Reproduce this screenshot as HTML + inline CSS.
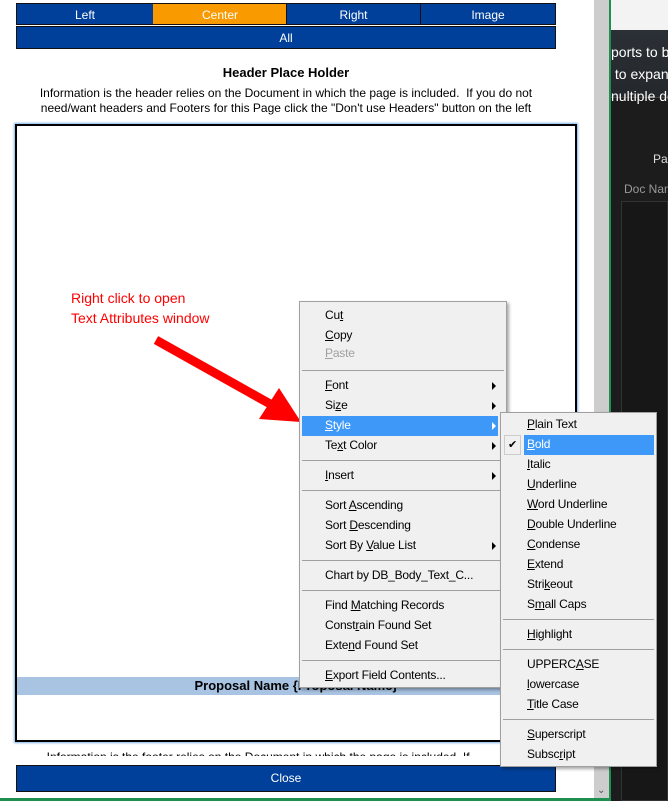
<!DOCTYPE html>
<html><head><meta charset="utf-8"><style>
*{margin:0;padding:0;box-sizing:border-box}
body{width:668px;height:801px;overflow:hidden;position:relative;background:#fff;font-family:"Liberation Sans",Arial,sans-serif}
.a{position:absolute}
.tab{position:absolute;top:3px;height:22px;background:#00409a;color:#fff;font-size:12px;text-align:center;line-height:22px;border:1px solid #111}
.menu{position:absolute;background:#f0f0f0;border:1px solid #a0a0a0;box-shadow:2px 2px 3px rgba(0,0,0,.35);font-size:12px;color:#000;letter-spacing:-0.2px}
.it{position:absolute;left:0;right:0;height:20px;line-height:19px}
.it span{position:absolute}
.sep{position:absolute;height:1px;background:#a0a0a0}
.arr{position:absolute;width:0;height:0;border-top:4px solid transparent;border-bottom:4px solid transparent;border-left:4px solid #000}
</style></head><body>
<div class="a" style="left:594px;top:0;width:15px;height:801px;background:#cdcdcd"></div>
<div class="a" style="left:609px;top:0;width:2px;height:801px;background:#1f8f4f"></div>
<div class="a" style="left:611px;top:0;width:57px;height:30px;background:#f3f3f3"></div>
<div class="a" style="left:611px;top:30px;width:57px;height:67px;background:linear-gradient(#2b3036,#24282c)"></div>
<div class="a" style="left:611px;top:97px;width:57px;height:704px;background:#1c1c1c;border-top:1px solid #444"></div>
<div class="a" style="left:611px;top:41px;color:#fff;font-size:14px;line-height:22px;white-space:nowrap;width:57px;overflow:hidden">ports to b<br>&nbsp;to expand<br>nultiple do</div>
<div class="a" style="left:653px;top:152px;color:#ddd;font-size:12px">Pa</div>
<div class="a" style="left:624px;top:182px;color:#999;font-size:12px;white-space:nowrap">Doc Nam</div>
<div class="a" style="left:621px;top:201px;width:47px;height:600px;border:1px solid #333;background:#171717"></div>
<div class="a" style="left:0;top:798px;width:609px;height:3px;background:#1f8f4f"></div>
<div class="a" style="left:597px;top:785px;font-size:10px;color:#555">⌄</div>

<div class="tab" style="left:16px;width:138px">Left</div>
<div class="tab" style="left:153px;width:134px;background:#f99a00;border-left:none;border-right:none">Center</div>
<div class="tab" style="left:286px;width:135px">Right</div>
<div class="tab" style="left:420px;width:136px">Image</div>
<div class="tab" style="left:16px;top:26px;width:540px;height:23px">All</div>

<div class="a" style="left:0;width:572px;top:65px;text-align:center;font-weight:bold;font-size:13px">Header Place Holder</div>
<div class="a" style="left:0;width:572px;top:86px;text-align:center;font-size:12px;line-height:15px">Information is the header relies on the Document in which the page is included.&nbsp; If you do not<br>need/want headers and Footers for this Page click the "Don't use Headers" button on the left</div>

<div class="a" style="left:15px;top:124px;width:562px;height:618px;border:2px solid #000;box-shadow:0 0 2px 1px #7fb2e8;background:#fff"></div>
<div class="a" style="left:17px;top:677px;width:558px;height:18px;background:#a8c4e2;text-align:center;font-weight:bold;font-size:13px;line-height:18px">Proposal Name {Proposal Name}</div>
<div class="a" style="left:30px;top:750px;width:520px;height:6px;overflow:hidden;font-size:12px;line-height:14px;color:#000;white-space:nowrap">&nbsp;&nbsp;&nbsp;&nbsp;&nbsp;Information is the footer relies on the Document in which the page is included. If</div>
<div class="tab" style="left:16px;top:765px;width:540px;height:27px;line-height:25px">Close</div>

<div class="a" style="left:71px;top:288px;color:#f00;font-size:14px;line-height:20px">Right click to open<br>Text Attributes window</div>
<svg class="a" style="left:0;top:0" width="668" height="801"><line x1="156" y1="340" x2="272" y2="405" stroke="#f00" stroke-width="9"/><polygon points="259,419 279,388 301,422" fill="#f00"/></svg>

<div class="menu" style="left:299px;top:301px;width:208px;height:387px">
<div class="it" style="top:4px"><span style="left:25px">Cu<u>t</u></span></div>
<div class="it" style="top:24px"><span style="left:25px"><u>C</u>opy</span></div>
<div class="it" style="top:42px;color:#a0a0a0"><span style="left:25px"><u>P</u>aste</span></div>
<div class="sep" style="top:68px;left:2px;right:2px"></div>
<div class="it" style="top:74px"><span style="left:25px"><u>F</u>ont</span><i class="arr" style="left:192px;top:6px"></i></div>
<div class="it" style="top:94px"><span style="left:25px">Si<u>z</u>e</span><i class="arr" style="left:192px;top:6px"></i></div>
<div class="it" style="top:114px;background:#3d98f8;left:2px;right:8px;color:#fff"><span style="left:23px"><u>S</u>tyle</span><i class="arr" style="left:190px;top:6px;border-left-color:#fff"></i></div>
<div class="it" style="top:134px"><span style="left:25px">Te<u>x</u>t Color</span><i class="arr" style="left:192px;top:6px"></i></div>
<div class="sep" style="top:158px;left:2px;right:2px"></div>
<div class="it" style="top:164px"><span style="left:25px"><u>I</u>nsert</span><i class="arr" style="left:192px;top:6px"></i></div>
<div class="sep" style="top:188px;left:2px;right:2px"></div>
<div class="it" style="top:194px"><span style="left:25px">Sort <u>A</u>scending</span></div>
<div class="it" style="top:214px"><span style="left:25px">Sort <u>D</u>escending</span></div>
<div class="it" style="top:234px"><span style="left:25px">Sort By <u>V</u>alue List</span><i class="arr" style="left:192px;top:6px"></i></div>
<div class="sep" style="top:258px;left:2px;right:2px"></div>
<div class="it" style="top:264px"><span style="left:25px">Chart by DB_Body_Text_C...</span></div>
<div class="sep" style="top:288px;left:2px;right:2px"></div>
<div class="it" style="top:294px"><span style="left:25px">Find <u>M</u>atching Records</span></div>
<div class="it" style="top:314px"><span style="left:25px">Const<u>r</u>ain Found Set</span></div>
<div class="it" style="top:334px"><span style="left:25px">Exte<u>n</u>d Found Set</span></div>
<div class="sep" style="top:358px;left:2px;right:2px"></div>
<div class="it" style="top:364px"><span style="left:25px"><u>E</u>xport Field Contents...</span></div>
</div>

<div class="menu" style="left:500px;top:412px;width:157px;height:355px">
<div class="it" style="top:2px"><span style="left:26px"><u>P</u>lain Text</span></div>
<div class="a" style="left:3px;top:22px;width:17px;height:20px;border:1px solid #ccc;font-size:11px;line-height:18px;text-align:center">✔</div>
<div class="it" style="top:22px;background:#3d98f8;left:23px;right:2px;color:#fff"><span style="left:3px"><u>B</u>old</span></div>
<div class="it" style="top:42px"><span style="left:26px"><u>I</u>talic</span></div>
<div class="it" style="top:62px"><span style="left:26px"><u>U</u>nderline</span></div>
<div class="it" style="top:82px"><span style="left:26px"><u>W</u>ord Underline</span></div>
<div class="it" style="top:102px"><span style="left:26px"><u>D</u>ouble Underline</span></div>
<div class="it" style="top:122px"><span style="left:26px"><u>C</u>ondense</span></div>
<div class="it" style="top:142px"><span style="left:26px"><u>E</u>xtend</span></div>
<div class="it" style="top:162px"><span style="left:26px">Stri<u>k</u>eout</span></div>
<div class="it" style="top:182px"><span style="left:26px">S<u>m</u>all Caps</span></div>
<div class="sep" style="top:206px;left:2px;right:2px"></div>
<div class="it" style="top:212px"><span style="left:26px"><u>H</u>ighlight</span></div>
<div class="sep" style="top:236px;left:2px;right:2px"></div>
<div class="it" style="top:242px"><span style="left:26px">UPPERC<u>A</u>SE</span></div>
<div class="it" style="top:262px"><span style="left:26px"><u>l</u>owercase</span></div>
<div class="it" style="top:282px"><span style="left:26px"><u>T</u>itle Case</span></div>
<div class="sep" style="top:306px;left:2px;right:2px"></div>
<div class="it" style="top:312px"><span style="left:26px"><u>S</u>uperscript</span></div>
<div class="it" style="top:332px"><span style="left:26px">Subsc<u>r</u>ipt</span></div>
</div>
</body></html>
